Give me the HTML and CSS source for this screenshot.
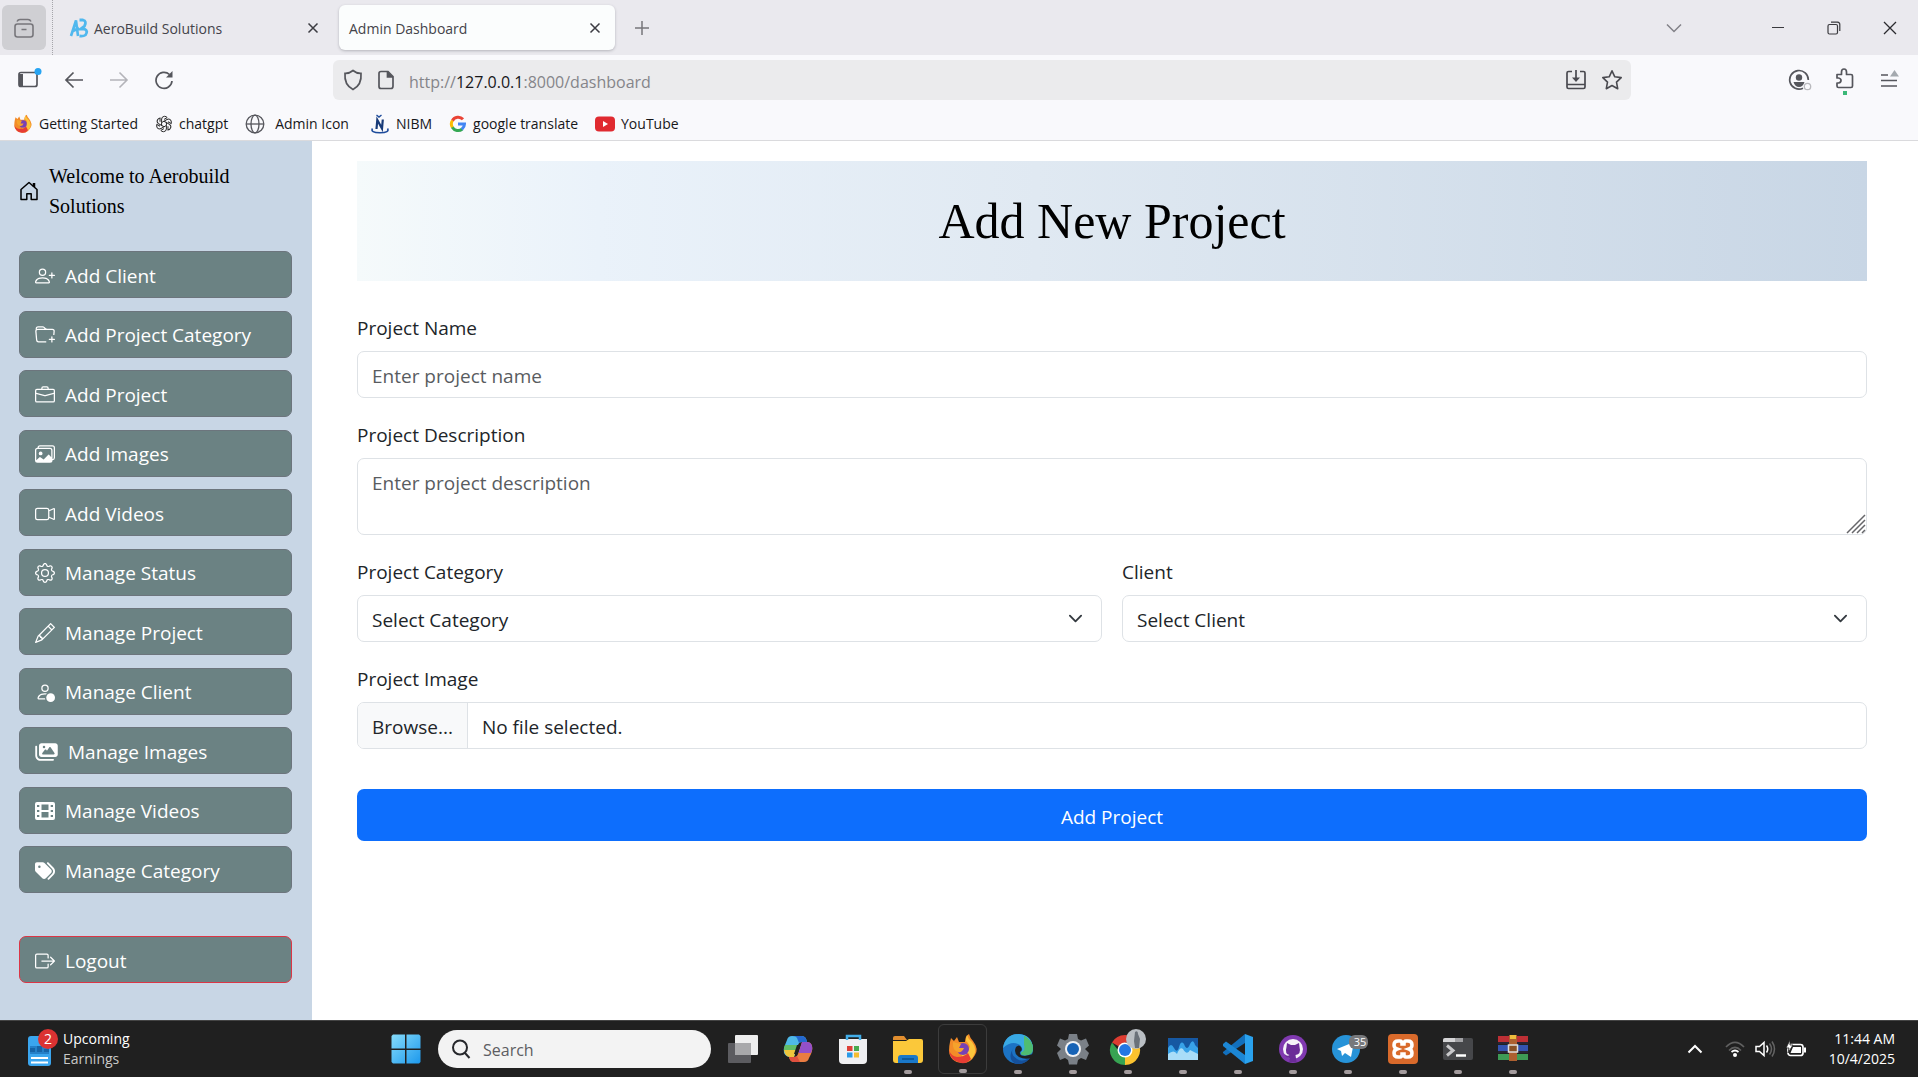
FILE: index.html
```html
<!DOCTYPE html>
<html lang="en">
<head>
<meta charset="utf-8">
<meta name="viewport" content="width=device-width, initial-scale=1">
<title>Admin Dashboard</title>
<link rel="stylesheet" href="styles.css">
</head>
<body>
<header class="browser">
  <div class="tabstrip">
    <button class="archive" type="button" aria-label="Recent tabs"><svg width="22" height="22" viewBox="0 0 22 22" fill="none" stroke="#77767b" stroke-width="1.6"><rect x="2" y="7" width="18" height="13" rx="2.5"/><path d="M4 4.500Q5 2.500 7 2.500h8q2 0 3 2M8.500 12.500h5"/></svg></button>
    <div class="tab">
      <svg class="tab-icon" width="20" height="20" viewBox="0 0 20 20" fill="none" stroke="#50b8ee" stroke-width="2.600"><path d="M2 18 7 2.500 9 18M4 13l6-3"/><path d="M10.500 2h3.500q4 1 1.500 6l-4 3h4q4 2 1 6-2 1.500-6 1" stroke-width="2.800"/></svg>
      <span class="tab-title">AeroBuild Solutions</span>
      <button class="tab-close" type="button" aria-label="Close tab"><svg width="12" height="12" viewBox="0 0 12 12" stroke="#3c3c42" stroke-width="1.500"><path d="M1.500 1.500l9 9M10.500 1.500l-9 9"/></svg></button>
    </div>
    <div class="tab tab-active">
      <span class="tab-title">Admin Dashboard</span>
      <button class="tab-close" type="button" aria-label="Close tab"><svg width="12" height="12" viewBox="0 0 12 12" stroke="#3c3c42" stroke-width="1.500"><path d="M1.500 1.500l9 9M10.500 1.500l-9 9"/></svg></button>
    </div>
    <button class="new-tab" type="button" aria-label="New tab"><svg width="16" height="16" viewBox="0 0 16 16" stroke="#77767b" stroke-width="1.500"><path d="M8 1v14M1 8h14"/></svg></button>
    <div class="window-controls">
      <button class="list-tabs" type="button" aria-label="List all tabs"><svg width="18" height="10" viewBox="0 0 18 10" fill="none" stroke="#828187" stroke-width="1.500"><path d="M2 1.500l7 7 7-7"/></svg></button>
      <button type="button" aria-label="Minimize"><svg width="14" height="14" viewBox="0 0 14 14" stroke="#3a3a3e"><path d="M1 6.500h12"/></svg></button>
      <button type="button" aria-label="Restore"><svg width="14" height="14" viewBox="0 0 14 14" fill="none" stroke="#3a3a3e" stroke-width="1.200"><rect x="1" y="3.500" width="9.500" height="9.500" rx="1.500"/><path d="M4 1.200h6.500q2.300.300 2.300 2.300V10"/></svg></button>
      <button type="button" aria-label="Close window"><svg width="14" height="14" viewBox="0 0 14 14" stroke="#2b2b2f" stroke-width="1.300"><path d="M1 1l12 12M13 1L1 13"/></svg></button>
    </div>
  </div>

  <div class="toolbar">
    <div class="nav-buttons">
      <button type="button" aria-label="Sidebar"><svg width="26" height="24" viewBox="0 0 26 24" fill="none"><rect x="3" y="4.500" width="18" height="14" rx="2" stroke="#55565c" stroke-width="1.700"/><path d="M3 6h4v12H3z" fill="#55565c"/><circle cx="22" cy="3.500" r="3.500" fill="#27a4f2"/></svg></button>
      <button type="button" aria-label="Back"><svg width="20" height="18" viewBox="0 0 20 18" fill="none" stroke="#55565c" stroke-width="1.700"><path d="M19 9H2M9.500 1.500L2 9l7.500 7.500"/></svg></button>
      <button type="button" aria-label="Forward"><svg width="20" height="18" viewBox="0 0 20 18" fill="none" stroke="#b4b4b9" stroke-width="1.600"><path d="M1 9h17M10.500 1.500L18 9l-7.500 7.500"/></svg></button>
      <button type="button" aria-label="Reload"><svg width="20" height="20" viewBox="0 0 20 20" fill="none" stroke="#55565c" stroke-width="1.700"><path d="M18 11a8 8 0 1 1-2.500-6.500"/><path d="M18.500 1v6.500H12z" fill="#55565c" stroke="none"/></svg></button>
    </div>
    <div class="address">
      <svg width="20" height="22" viewBox="0 0 20 22" fill="none" stroke="#55565c" stroke-width="1.700"><path d="M10 1.500q3.500 3 8 2.800Q19 16 10 20.500 1 16 2 4.300q4.500.200 8-2.800z"/></svg>
      <svg width="18" height="20" viewBox="0 0 18 20" fill="none" stroke="#55565c" stroke-width="1.700"><path d="M4 1.500h7l5 5V16q0 2.500-2 2.500H4q-2 0-2-2v-13q0-2 2-2z"/><path d="M10.500 1.500V7H16" fill="#55565c"/></svg>
      <div class="url">http://<span class="url-host">127.0.0.1</span>:8000/dashboard</div>
      <button type="button" aria-label="Install"><svg width="22" height="22" viewBox="0 0 22 22" fill="none" stroke="#4a4a50" stroke-width="1.700"><path d="M7 2.500H3.500Q2 2.500 2 4v14q0 1.500 1.500 1.500h15q1.500 0 1.500-1.500V4q0-1.500-1.500-1.500H15M2 15.500h18M11 1v10"/><path d="M7 8.500h8l-4 4.500z" fill="#4a4a50" stroke="none"/></svg></button>
      <button type="button" aria-label="Bookmark this page"><svg width="22" height="22" viewBox="0 0 22 22" fill="none" stroke="#4a4a50" stroke-width="1.600" stroke-linejoin="round"><path d="M11 1.800l2.800 6 6.400.800-4.700 4.500 1.200 6.600L11 16.500l-5.700 3.200 1.200-6.600L1.800 8.600l6.400-.800z"/></svg></button>
    </div>
    <div class="tool-buttons">
      <button type="button" aria-label="Account"><svg width="24" height="22" viewBox="0 0 24 22" fill="none"><path d="M15 19.200A9.300 9.300 0 1 1 20.300 11" stroke="#55565c" stroke-width="1.700"/><circle cx="11" cy="8.500" r="3.200" fill="#55565c"/><path d="M5.500 13h11q-1.500 5-5.500 5t-5.500-5z" fill="#55565c"/><circle cx="19.500" cy="17.500" r="3.200" stroke="#b9b9bd" stroke-width="1.300"/></svg></button>
      <button type="button" aria-label="Extensions"><svg width="20" height="30" viewBox="0 0 20 30" fill="none"><path d="M2 9.500h4.500V7q0-3 2.500-3t2.500 3v2.500H16q1.500 0 1.500 1.500v10q0 1.500-1.500 1.500H3.500Q2 22.500 2 21v-3h1.500q2.500-.500 2.500-2.500T3.500 13H2z" stroke="#55565c" stroke-width="1.700" stroke-linejoin="round"/><rect x="8" y="26" width="4" height="4" fill="#3cb878"/></svg></button>
      <button type="button" aria-label="Menu"><svg width="20" height="20" viewBox="0 0 20 20" stroke="#55565c" stroke-width="1.600"><path d="M1 5h7M1 10.500h16M1 16h16"/><path d="M10 6.500L14.500 0 19 6.500z" fill="#a4a9ae" stroke="none"/></svg></button>
    </div>
  </div>

  <nav class="bookmarks" aria-label="Bookmarks">
    <a href="#"><svg width="20" height="20" viewBox="0 0 32 32"><use href="#fox"/></svg>Getting Started</a>
    <a href="#"><svg width="18" height="18" viewBox="0 0 18 18" fill="none" stroke="#2b2b2b"><g id="petal"><path d="M9 6.200L6.600 7.600V4q.300-2.600 2.800-2.700 1.800 0 2.800 1.300L9 4.400"/></g><use href="#petal" transform="rotate(60 9 9)"/><use href="#petal" transform="rotate(120 9 9)"/><use href="#petal" transform="rotate(180 9 9)"/><use href="#petal" transform="rotate(240 9 9)"/><use href="#petal" transform="rotate(300 9 9)"/></svg>chatgpt</a>
    <a href="#"><svg width="20" height="20" viewBox="0 0 20 20" fill="none" stroke="#55565c" stroke-width="1.300"><circle cx="10" cy="10" r="8.800"/><ellipse cx="10" cy="10" rx="4" ry="8.800"/><path d="M1.500 10h17"/></svg><span class="wide-label">Admin Icon</span></a>
    <a href="#"><svg width="20" height="20" viewBox="0 0 20 20" fill="none" stroke="#1d4b9b"><path d="M6.500 15l.800-9 4.700 8.500.800-9" stroke="#173a78" stroke-width="2.200"/><path d="M2.500 14.500q-2.500 4 7.500 4.300 10-.300 7.500-4.300" stroke-width="1.600"/><path d="M6.500 1l2.500 2 2.500-2" stroke-width="1.400"/></svg>NIBM</a>
    <a href="#"><svg width="18" height="18" viewBox="0 0 18 18" fill="none" stroke-width="3"><path d="M14 4.200A6.600 6.600 0 0 0 3.400 5.700" stroke="#ea4335"/><path d="M3.400 5.500a6.700 6.700 0 0 0 0 7" stroke="#fbbc05"/><path d="M3.300 12.300a6.600 6.600 0 0 0 10 1.700" stroke="#34a853"/><path d="M12.800 14.300Q15.500 12 15.500 9H9" stroke="#4285f4"/></svg>google translate</a>
    <a href="#"><svg width="20" height="16" viewBox="0 0 20 16"><rect width="20" height="15" y=".5" rx="4" fill="#e02a30"/><path d="M8 5l5 3-5 3z" fill="#fff"/></svg>YouTube</a>
  </nav>
</header>

<div class="page">
  <aside class="sidebar">
    <div class="welcome">
      <svg width="20" height="20" viewBox="0 0 20 20" fill="none" stroke="#000" stroke-width="1.500"><path d="M2 8.500V18.500h5.800v-5.700h4.400v5.700H18V8.500L10 1.500z" stroke-linejoin="round"/><path d="M15 2v4" stroke-width="2.500"/></svg>
      <span>Welcome to Aerobuild Solutions</span>
    </div>
    <nav class="menu">
      <button type="button"><svg width="20" height="20" viewBox="0 0 16 16" fill="currentColor"><path d="M6 8a3 3 0 1 0 0-6 3 3 0 0 0 0 6m2-3a2 2 0 1 1-4 0 2 2 0 0 1 4 0m4 8c0 1-1 1-1 1H1s-1 0-1-1 1-4 6-4 6 3 6 4m-1-.004c-.001-.246-.154-.986-.832-1.664C9.516 10.680 8.289 10 6 10s-3.516.680-4.168 1.332c-.678.678-.830 1.418-.832 1.664z"/><path d="M13.500 5a.500.500 0 0 1 .500.500V7h1.500a.500.500 0 0 1 0 1H14v1.500a.500.500 0 0 1-1 0V8h-1.500a.500.500 0 0 1 0-1H13V5.500a.500.500 0 0 1 .500-.500"/></svg>Add Client</button>
      <button type="button"><svg width="20" height="20" viewBox="0 0 16 16" fill="currentColor"><path d="m.5 3 .04.87a2 2 0 0 0-.342 1.311l.637 7A2 2 0 0 0 2.826 14H9v-1H2.826a1 1 0 0 1-.995-.91l-.637-7A1 1 0 0 1 2.190 4h11.620a1 1 0 0 1 .996 1.090L14.540 8h1.005l.256-2.819A2 2 0 0 0 13.810 3H9.828a2 2 0 0 1-1.414-.586l-.828-.828A2 2 0 0 0 6.172 1H2.500a2 2 0 0 0-2 2m5.672-1a1 1 0 0 1 .707.293L7.586 3H2.190q-.362.002-.683.120L1.500 2.980a1 1 0 0 1 1-.980z"/><path d="M13.500 9a.5.5 0 0 1 .5.5V11h1.500a.5.5 0 1 1 0 1H14v1.500a.5.5 0 1 1-1 0V12h-1.500a.5.5 0 0 1 0-1H13V9.500a.5.5 0 0 1 .5-.5"/></svg>Add Project Category</button>
      <button type="button"><svg width="20" height="20" viewBox="0 0 16 16" fill="currentColor"><path d="M6.500 1A1.500 1.500 0 0 0 5 2.500V3H1.500A1.500 1.500 0 0 0 0 4.500v8A1.500 1.500 0 0 0 1.500 14h13a1.500 1.500 0 0 0 1.500-1.500v-8A1.500 1.500 0 0 0 14.500 3H11v-.5A1.500 1.500 0 0 0 9.500 1zm0 1h3a.5.5 0 0 1 .5.5V3H6v-.5a.5.5 0 0 1 .5-.5m1.886 6.914L15 7.151V12.500a.5.5 0 0 1-.5.5h-13a.5.5 0 0 1-.5-.5V7.150l6.614 1.764a1.500 1.500 0 0 0 .772 0M1.500 4h13a.5.5 0 0 1 .5.5v1.616L8.129 7.948a.5.5 0 0 1-.258 0L1 6.116V4.500a.5.5 0 0 1 .5-.5"/></svg>Add Project</button>
      <button type="button"><svg width="20" height="20" viewBox="0 0 16 16" fill="currentColor"><path d="M14.002 13a2 2 0 0 1-2 2h-10a2 2 0 0 1-2-2V5A2 2 0 0 1 2 3a2 2 0 0 1 2-2h10a2 2 0 0 1 2 2v8a2 2 0 0 1-1.998 2M14 2H4a1 1 0 0 0-1 1h9.002a2 2 0 0 1 2 2v7A1 1 0 0 0 15 11V3a1 1 0 0 0-1-1M2.002 4a1 1 0 0 0-1 1v8l2.646-2.354a.5.5 0 0 1 .63-.062l2.660 1.773 3.710-3.710a.5.5 0 0 1 .577-.094l1.777 1.947V5a1 1 0 0 0-1-1z"/><path d="M4.502 9a1.500 1.500 0 1 0 0-3 1.500 1.500 0 0 0 0 3"/></svg>Add Images</button>
      <button type="button"><svg width="20" height="20" viewBox="0 0 16 16" fill="currentColor"><path fill-rule="evenodd" d="M0 5a2 2 0 0 1 2-2h7.500a2 2 0 0 1 1.983 1.738l3.110-1.382A1 1 0 0 1 16 4.269v7.462a1 1 0 0 1-1.406.913l-3.111-1.382A2 2 0 0 1 9.500 13H2a2 2 0 0 1-2-2zm11.500 5.175 3.500 1.556V4.269l-3.500 1.556zM2 4a1 1 0 0 0-1 1v6a1 1 0 0 0 1 1h7.500a1 1 0 0 0 1-1V5a1 1 0 0 0-1-1z"/></svg>Add Videos</button>
      <button type="button"><svg width="20" height="20" viewBox="0 0 16 16" fill="currentColor"><path d="M8 4.754a3.246 3.246 0 1 0 0 6.492 3.246 3.246 0 0 0 0-6.492M5.754 8a2.246 2.246 0 1 1 4.492 0 2.246 2.246 0 0 1-4.492 0"/><path d="M9.796 1.343c-.527-1.790-3.065-1.790-3.592 0l-.094.319a.873.873 0 0 1-1.255.520l-.292-.160c-1.640-.892-3.433.902-2.540 2.541l.159.292a.873.873 0 0 1-.520 1.255l-.319.094c-1.790.527-1.790 3.065 0 3.592l.319.094a.873.873 0 0 1 .520 1.255l-.160.292c-.892 1.640.901 3.434 2.541 2.540l.292-.159a.873.873 0 0 1 1.255.520l.094.319c.527 1.790 3.065 1.790 3.592 0l.094-.319a.873.873 0 0 1 1.255-.520l.292.160c1.640.893 3.434-.902 2.540-2.541l-.159-.292a.873.873 0 0 1 .520-1.255l.319-.094c1.790-.527 1.790-3.065 0-3.592l-.319-.094a.873.873 0 0 1-.520-1.255l.160-.292c.893-1.640-.902-3.433-2.541-2.540l-.292.159a.873.873 0 0 1-1.255-.520zm-2.633.283c.246-.835 1.428-.835 1.674 0l.094.319a1.873 1.873 0 0 0 2.693 1.115l.291-.160c.764-.415 1.600.420 1.184 1.185l-.159.292a1.873 1.873 0 0 0 1.116 2.692l.318.094c.835.246.835 1.428 0 1.674l-.319.094a1.873 1.873 0 0 0-1.115 2.693l.160.291c.415.764-.420 1.600-1.185 1.184l-.291-.159a1.873 1.873 0 0 0-2.693 1.116l-.094.318c-.246.835-1.428.835-1.674 0l-.094-.319a1.873 1.873 0 0 0-2.692-1.115l-.292.160c-.764.415-1.600-.420-1.184-1.185l.159-.291A1.873 1.873 0 0 0 1.945 8.930l-.319-.094c-.835-.246-.835-1.428 0-1.674l.319-.094A1.873 1.873 0 0 0 3.060 4.377l-.160-.292c-.415-.764.420-1.600 1.185-1.184l.292.159a1.873 1.873 0 0 0 2.692-1.115z"/></svg>Manage Status</button>
      <button type="button"><svg width="20" height="20" viewBox="0 0 16 16" fill="currentColor"><path d="M12.146.146a.5.5 0 0 1 .708 0l3 3a.5.5 0 0 1 0 .708l-10 10a.5.5 0 0 1-.168.11l-5 2a.5.5 0 0 1-.65-.65l2-5a.5.5 0 0 1 .11-.168zM11.207 2.500 13.500 4.793 14.793 3.500 12.500 1.207zm1.586 3L10.500 3.207 4 9.707V10h.5a.5.5 0 0 1 .5.5v.5h.5a.5.5 0 0 1 .5.5v.5h.293zm-9.761 5.175-.106.106-1.528 3.821 3.821-1.528.106-.106A.5.5 0 0 1 5 12.500V12h-.5a.5.5 0 0 1-.5-.5V11h-.5a.5.5 0 0 1-.468-.325"/></svg>Manage Project</button>
      <button type="button"><svg width="20" height="20" viewBox="0 0 16 16" fill="currentColor"><path d="M11 5a3 3 0 1 1-6 0 3 3 0 0 1 6 0M8 7a2 2 0 1 0 0-4 2 2 0 0 0 0 4m.256 7a4.500 4.500 0 0 1-.229-1.004H3c.001-.246.154-.986.832-1.664C4.484 10.680 5.711 10 8 10q.39 0 .74.025c.226-.341.496-.65.804-.918Q8.844 9.002 8 9c-5 0-6 3-6 4s1 1 1 1z"/><circle cx="12.500" cy="12.500" r="3.500"/></svg>Manage Client</button>
      <button type="button"><svg width="23" height="20" viewBox="0 0 576 512" fill="currentColor"><path d="M160 32c-35.300 0-64 28.700-64 64V320c0 35.300 28.700 64 64 64H512c35.300 0 64-28.700 64-64V96c0-35.300-28.700-64-64-64H160zM396 138.700l96 144c4.900 7.400 5.400 16.800 1.200 24.600S480.900 320 472 320H328 280 200c-9.200 0-17.600-5.300-21.600-13.600s-2.900-18.200 2.900-25.400l64-80c4.600-5.700 11.400-9 18.700-9s14.200 3.300 18.700 9l17.300 21.600 56-84C360.500 132 368 128 376 128s15.500 4 20 10.700zM192 128a32 32 0 1 1 64 0 32 32 0 1 1 -64 0zM48 120c0-13.300-10.700-24-24-24S0 106.700 0 120V344c0 75.100 60.900 136 136 136H456c13.300 0 24-10.700 24-24s-10.700-24-24-24H136c-48.600 0-88-39.400-88-88V120z"/></svg>Manage Images</button>
      <button type="button"><svg width="20" height="20" viewBox="0 0 20 20" fill="currentColor"><path fill-rule="evenodd" d="M2 1h16q2 0 2 2v14q0 2-2 2H2q-2 0-2-2V3q0-2 2-2zM6.500 3.500V9h7V3.500zM6.500 11v5.500h7V11zM2 4v2h2.300V4zM2 9v2h2.300V9zM2 14v2h2.300v-2zM15.700 4v2H18V4zM15.700 9v2H18V9zM15.700 14v2H18v-2z"/></svg>Manage Videos</button>
      <button type="button"><svg width="20" height="20" viewBox="0 0 512 512" fill="currentColor"><path d="M345 39.100L472.800 168.400c52.400 53 52.400 138.200 0 191.200L360.800 472.900c-9.300 9.400-24.500 9.500-33.900 .2s-9.500-24.500-.2-33.900L438.600 325.900c33.900-34.300 33.900-89.400 0-123.700L310.900 72.900c-9.300-9.400-9.200-24.600 .2-33.900s24.600-9.200 33.900 .2zM0 229.500V80C0 53.500 21.500 32 48 32H197.500c17 0 33.300 6.700 45.300 18.700l168 168c25 25 25 65.500 0 90.500L277.300 442.700c-25 25-65.500 25-90.500 0l-168-168C6.700 262.700 0 246.500 0 229.500zM144 144a32 32 0 1 0 -64 0 32 32 0 1 0 64 0z"/></svg>Manage Category</button>
    </nav>
    <button class="logout" type="button"><svg width="20" height="20" viewBox="0 0 16 16" fill="currentColor"><path d="M10 12.500a.5.5 0 0 1-.5.5h-8a.5.5 0 0 1-.5-.5v-9a.5.5 0 0 1 .5-.5h8a.5.5 0 0 1 .5.5v2a.5.5 0 0 0 1 0v-2A1.500 1.500 0 0 0 9.500 2h-8A1.500 1.500 0 0 0 0 3.500v9A1.500 1.500 0 0 0 1.500 14h8a1.500 1.500 0 0 0 1.500-1.500v-2a.5.5 0 0 0-1 0z"/><path d="M15.854 8.354a.5.5 0 0 0 0-.708l-3-3a.5.5 0 0 0-.708.708L14.293 7.500H5.500a.5.5 0 0 0 0 1h8.793l-2.147 2.146a.5.5 0 0 0 .708.708z"/></svg>Logout</button>
  </aside>

  <main class="content">
    <h1 class="banner">Add New Project</h1>
    <form class="form">
      <div class="field">
        <label for="name">Project Name</label>
        <input class="control" id="name" type="text" placeholder="Enter project name">
      </div>
      <div class="field">
        <label for="description">Project Description</label>
        <div class="textarea-wrap">
          <textarea class="control" id="description" rows="2" placeholder="Enter project description"></textarea>
          <svg class="grip" width="20" height="20" viewBox="0 0 20 20" stroke="#66666a" stroke-width="1.500"><path d="M1 19L19 1M6 19L19 6M11 19l8-8M16 19l3-3"/></svg>
        </div>
      </div>
      <div class="field-row">
        <div class="field">
          <label for="category">Project Category</label>
          <select class="control" id="category"><option>Select Category</option></select>
        </div>
        <div class="field">
          <label for="client">Client</label>
          <select class="control" id="client"><option>Select Client</option></select>
        </div>
      </div>
      <div class="field">
        <label for="image">Project Image</label>
        <label class="control file" for="image"><span class="file-button">Browse...</span><span class="file-name">No file selected.</span></label>
        <input class="file-input" id="image" type="file">
      </div>
      <button class="submit" type="submit">Add Project</button>
    </form>
  </main>
</div>

<footer class="taskbar">
  <button class="widget" type="button">
    <svg width="34" height="40" viewBox="0 0 34 40"><rect x="4" y="7" width="23" height="30" rx="3" fill="#3aa5ee"/><path d="M6 19h5v4H6zM13 17h5v6h-5zM20 20h5v3h-5z" fill="#14609f"/><path d="M6 17h19v8H6z" fill="#1565ae" opacity=".6"/><path d="M7 29h17M7 33.500h17" stroke="#fff" stroke-width="2"/><circle cx="24" cy="10" r="10" fill="#db3232"/><text class="badge-text" x="24" y="15" text-anchor="middle" fill="#fff">2</text></svg>
    <span class="widget-text"><span>Upcoming</span><span class="dim">Earnings</span></span>
  </button>

  <div class="apps">
    <button class="app" type="button" aria-label="Start"><svg width="32" height="32" viewBox="0 0 32 32"><defs><linearGradient id="win" x2="1" y2="1" gradientUnits="objectBoundingBox"><stop stop-color="#86dcfb"/><stop offset="1" stop-color="#1c98ec"/></linearGradient></defs><path d="M3 1.500h12v14H1.500V3zM16.500 1.500H29L30.500 3v12.500h-14zM1.500 17h13.500v13.500H3L1.500 29zM16.500 17h14v12L29 30.500H16.500z" fill="url(#win)"/></svg></button>
    <label class="search"><svg width="20" height="20" viewBox="0 0 20 20" fill="none" stroke="#27282c" stroke-width="2"><circle cx="9" cy="8.500" r="7"/><path d="M13.500 13.500L18.500 19"/></svg><input type="search" placeholder="Search" aria-label="Search"></label>
    <button class="app" type="button" aria-label="Task view"><svg width="32" height="32" viewBox="0 0 32 32"><rect x="1" y="10" width="23" height="20" rx="1" fill="#5c5c60"/><rect x="8" y="2" width="23" height="20" rx="1" fill="#eee"/><path d="M8 10h16v12H8z" fill="#a9a9ab"/></svg></button>
    <button class="app" type="button" aria-label="Copilot"><svg width="32" height="32" viewBox="0 0 32 32"><path d="M10 3h10q4 0 5 6h-5q-3 0-4 3l-4 12H8q-4 0-6-4-1-4 1-8l2-5q1-4 5-4z" fill="#4fb9e8"/><path d="M10 3h10q4 0 5 6h-5q-2 0-3 1l-2-5q-1-2-5-2z" fill="#2468cf"/><path d="M3 12h13l-2 6H2q-.5-3 1-6z" fill="#62bd67"/><path d="M2 17h12l-2 7H8q-5 0-6-7z" fill="#f0c63c"/><path d="M22 29H12q-4 0-5-5h5q3 0 4-3l4-12h5q4 0 5 4 1 3-1 8l-2 4q-1 4-5 4z" fill="#ea7d42"/><path d="M20 9h5q4 0 5 4 1 3-1 7H16.500z" fill="#9450c9"/><path d="M7 24h5q2 0 3-1l3 6h-6q-4 0-5-5z" fill="#e0503f"/><path d="M15 12h3.500l-3 9H12z" fill="#202020"/></svg></button>
    <button class="app" type="button" aria-label="Store"><svg width="32" height="32" viewBox="0 0 32 32"><path d="M2 6h28v21q0 4-4 4H6q-4 0-4-4z" fill="#f0f0f2"/><path d="M10 7V3h13v4" fill="none" stroke="#42aeea" stroke-width="2.500"/><path d="M10 13h5.500v5H10z" fill="#dd4038"/><path d="M17 13h5v5h-5z" fill="#48aa4e"/><path d="M10 19.500h5.500v5H10z" fill="#2b9be8"/><path d="M17 19.500h5v5h-5z" fill="#f5bd30"/></svg></button>
    <button class="app running" type="button" aria-label="File Explorer"><svg width="32" height="32" viewBox="0 0 32 32"><path d="M1 5q0-2 2-2h9l3 4H1z" fill="#e18e2f"/><path d="M1 8h13l3-2h12q2 0 2 2v19q0 3-3 3H4q-3 0-3-3z" fill="#fbc83a"/><path d="M6 30v-5q0-3 3-3h14q3 0 3 3v5z" fill="#1a78c9"/><path d="M10 26h12" stroke="#0d5a9d" stroke-width="2"/></svg></button>
    <button class="app running active" type="button" aria-label="Firefox"><svg width="32" height="32" viewBox="0 0 32 32"><g id="fox"><path d="M3 9l1-4 3 3 3-4 2 5h6q0-6 4-8 1 4 4 7 6 8 2 14-5 9-13 8Q3 29 2 18q0-5 1-9z" fill="#f38b28"/><path d="M20 2q1 4 5 7 6 8 1 15-3 5-9 5l-3-9 7-3q4-4-2-9 0-4 1-6z" fill="#fbc53c"/><path d="M2 17q2 6 8 7 7 0 11-4l3 6q-4 5-10 4Q3 28 2 17z" fill="#e63d34"/><circle cx="16" cy="16" r="6" fill="#7741b4"/><path d="M6 9l8 2-2 4h5q-2 5-6 4-6-2-5-10z" fill="#f5a22c"/></g></svg></button>
    <button class="app running" type="button" aria-label="Edge"><svg width="32" height="32" viewBox="0 0 32 32"><circle cx="16" cy="16" r="15" fill="#1c73c4"/><path d="M1 15Q3 1 17 1q13 1 14 14 0 7-8 7-5 0-4-3 3-3-1-7-8-5-17 3z" fill="#39a9e4"/><path d="M22 2.500q9 5 9 13 0 7-8 7-5 0-4-3 5-2 3-8z" fill="#4fbd72"/><path d="M12 14q-5 7 3 12 6 4 13-2-4 8-14 7-10-5-2-17z" fill="#15509b"/><path d="M14 14q3-3 5 0 2 3-1 5-1 4 5 4l8-2-2 4q-6 2-12-1-6-4-3-10z" fill="#202020"/></svg></button>
    <button class="app running" type="button" aria-label="Settings"><svg width="32" height="32" viewBox="0 0 32 32"><path d="M12 1h8l1 5 3 1.500 5-2 3 7-4 3.500 4 4-3 7-5-2-3 2-1 4.500h-8l-1-4.500-3-2-5 2-3-7 4-4-4-3.500 3-7 5 2L11 6z" fill="#7a8087"/><circle cx="16" cy="16" r="8" fill="#f0f1f4"/><circle cx="16" cy="16" r="6" fill="#1763b6"/></svg></button>
    <button class="app running" type="button" aria-label="Chrome"><svg width="40" height="44" viewBox="0 0 40 44"><path d="M17 23L4 15.500A15 15 0 0 1 30 15.500H17z" fill="#dd3c31"/><path d="M17 23h-7L4 15.500A15 15 0 0 0 17 38l7-12z" fill="#37a352"/><path d="M17 23l7-7.500h6A15 15 0 0 1 17 38z" fill="#fbc22f"/><circle cx="17" cy="23" r="7.500" fill="#fff"/><circle cx="17" cy="23" r="6" fill="#2476e3"/><circle cx="28" cy="12" r="10" fill="#babfc4"/><path d="M27 5q3-2 3 2l2 5-1 9h-4l-1-7z" fill="#6b727a"/></svg></button>
    <button class="app running" type="button" aria-label="Task Manager"><svg width="32" height="32" viewBox="0 0 32 32"><path d="M1 5h30v22H1z" fill="#1658a2"/><path d="M1 15q3-6 6 0 3 6 5-1 2-7 5-3 3 8 6 0 3-6 5 1l3 3v12H1z" fill="#38a2e8"/><path d="M1 21q6-5 9 0 3-8 6-5 4 7 7 1l8 4v6H1z" fill="#a9ddf8"/></svg></button>
    <button class="app running" type="button" aria-label="Visual Studio Code"><svg width="32" height="32" viewBox="0 0 32 32"><path d="M23 1l8 3v24l-8 3z" fill="#2aa2ee"/><path d="M1 20l3 2.500L23 10V1L1 19z" fill="#1270bd"/><path d="M1 11l3-2.500L23 22v9L1 13z" fill="#1c87d5"/></svg></button>
    <button class="app running" type="button" aria-label="GitHub Desktop"><svg width="32" height="32" viewBox="0 0 32 32"><circle cx="16" cy="16" r="14" fill="#8039b0"/><circle cx="16" cy="16" r="10" fill="#f5f2f8"/><path d="M10 10l4 2h4l4-2 .500 4q2 7-4 8l1 7h-7v-4q-4 0-5-4 3 3 5 1-5-1-3-8z" fill="#6b2c98"/></svg></button>
    <button class="app running" type="button" aria-label="Telegram"><svg width="40" height="44" viewBox="0 0 40 44"><circle cx="18" cy="22" r="14" fill="#2793d8"/><path d="M9 22l17-7-3 15-6-4-3 3-1-5z" fill="#fff"/><rect x="21" y="8" width="19" height="14" rx="6" fill="#77787b"/><text class="count-text" x="32" y="19" text-anchor="middle" fill="#fff">35</text></svg></button>
    <button class="app running" type="button" aria-label="XAMPP"><svg width="32" height="32" viewBox="0 0 32 32"><rect x="1" y="1" width="30" height="30" rx="4" fill="#d96a2b"/><path d="M11 8h2q2 0 2 3h2q0-3 2-3h2q4 0 4 4 0 3-3 4 3 1 3 4 0 4-4 4h-2q-2 0-2-3h-2q0 3-2 3h-2q-4 0-4-4 0-3 3-4-3-1-3-4 0-4 4-4z" fill="none" stroke="#fff" stroke-width="3.500"/></svg></button>
    <button class="app running" type="button" aria-label="Terminal"><svg width="32" height="32" viewBox="0 0 32 32"><rect x="1" y="5" width="30" height="22" rx="2" fill="#46474a"/><path d="M3 5h10v4H1V7q0-2 2-2z" fill="#d4d4d6"/><path d="M13 5h8v4h-8z" fill="#a1a1a4"/><path d="M5 12.500l6 5-6 5" fill="none" stroke="#c8c8ca" stroke-width="3"/><path d="M14 22.500h10" stroke="#fff" stroke-width="2.500"/></svg></button>
    <button class="app running" type="button" aria-label="WinRAR"><svg width="32" height="32" viewBox="0 0 32 32"><path d="M1 3h30v8H1z" fill="#bd2f35"/><path d="M1 12h30v8H1z" fill="#3453b0"/><path d="M1 21h30v6H1z" fill="#3e9b55"/><path d="M1 9h30v2H1zM1 18h30v2H1z" fill="#2a2533"/><path d="M12 2h8v26h-8z" fill="#ad6030"/><path d="M13 2h6v4h-6z" fill="#edbc3d"/><rect x="11.500" y="12" width="9" height="7" fill="#895026" stroke="#ddd" stroke-width="1.500"/></svg></button>
  </div>

  <div class="tray">
    <svg width="16" height="10" viewBox="0 0 16 10" fill="none" stroke="#fff" stroke-width="2"><path d="M1.500 8.500L8 2l6.500 6.500"/></svg>
    <div class="tray-icons">
      <svg width="20" height="18" viewBox="0 0 20 18" fill="none" stroke-width="1.700"><path d="M1 7q9-9 18 0M4 10.500q6-6 12 0" stroke="#606060"/><path d="M6.500 12q3.500-3 7 0" stroke="#fff"/><circle cx="10" cy="15" r="2" fill="#fff"/></svg>
      <svg width="22" height="18" viewBox="0 0 22 18" fill="none" stroke="#fff" stroke-width="1.500"><path d="M2 6.500h3.500L10 2.500v13l-4.500-4H2zM12.500 5.500q2.500 3.500 0 7"/><path d="M15.500 3.500q4 5.500 0 11M18 1.500q5 7.500 0 15" stroke="#646464"/></svg>
      <svg width="22" height="18" viewBox="0 0 22 18" fill="none"><rect x="3" y="4.500" width="15" height="11" rx="2.500" stroke="#fff" stroke-width="1.700"/><path d="M8 7h8v6H5.500zM19 7.500h2v5h-2z" fill="#fff"/><path d="M5 0L1 8h3l-1 5 5-8H5z" fill="#fff" stroke="#202020" stroke-width=".8"/></svg>
    </div>
    <div class="clock"><span>11:44 AM</span><span>10/4/2025</span></div>
  </div>
</footer>
</body>
</html>
```
FILE: styles.css
```css
* {
  box-sizing: border-box;
}

body {
  margin: 0;
  min-height: 100vh;
  display: flex;
  flex-direction: column;
  font-family: "Open Sans", "Noto Sans", sans-serif;
  font-size: 19px;
  line-height: 30px;
  color: #212529;
  background: #fff;
}

button,
input,
select,
textarea {
  font: inherit;
  color: inherit;
}

button {
  display: flex;
  align-items: center;
  justify-content: center;
  padding: 0;
  border: 0;
  background: none;
}

svg {
  display: block;
  flex: none;
}

/* Browser frame */
.browser {
  border-bottom: 1px solid #dadadd;
  background: #f9f9fc;
  font-size: 14px;
  line-height: 20px;
}

.tabstrip {
  display: flex;
  align-items: center;
  height: 55px;
  padding-left: 2px;
  background: #eae9ee;
}

.archive {
  width: 44px;
  height: 45px;
  border-radius: 6px;
  background: #cfcfd3;
}

.tab {
  display: flex;
  align-items: center;
  width: 276px;
  height: 45px;
  padding: 0 14px 0 10px;
  border-radius: 6px;
  color: #44434a;
}

.archive + .tab {
  width: 287px;
  height: 55px;
  margin: 0 0 0 6px;
  padding: 0 20px 0 16px;
  border-left: 1px dotted #a5a5aa;
  border-radius: 0;
}

.tab-active {
  background: #fbfdfd;
  box-shadow: 0 1px 3px #b4b4ba;
}

.tab-icon {
  margin-right: 5px;
}

.tab-title {
  padding-top: 2px;
}

.tab-close {
  margin-left: auto;
}

.new-tab {
  width: 54px;
  height: 45px;
}

.window-controls {
  display: flex;
  margin-left: auto;
}

.window-controls button {
  width: 56px;
  height: 45px;
}

.window-controls .list-tabs {
  margin-right: 48px;
}

.toolbar {
  display: flex;
  align-items: center;
  height: 50px;
}

.nav-buttons {
  display: flex;
  width: 333px;
  padding-left: 6px;
}

.nav-buttons button,
.tool-buttons button {
  width: 45px;
  height: 40px;
}

.address {
  display: flex;
  flex: 1;
  align-items: center;
  gap: 14px;
  height: 40px;
  padding: 0 8px 0 10px;
  border-radius: 6px;
  background: #ebebed;
  color: #85858a;
  font-size: 16px;
}

.url {
  flex: 1;
  padding-top: 3px;
}

.url-host {
  color: #17171a;
}

.tool-buttons {
  display: flex;
  justify-content: flex-end;
  width: 287px;
  padding-right: 6px;
}

.bookmarks {
  display: flex;
  align-items: center;
  gap: 17px;
  height: 35px;
  padding: 2px 13px 0;
}

.bookmarks a {
  display: flex;
  align-items: center;
  gap: 6px;
  color: #17171a;
  text-decoration: none;
}

.wide-label {
  padding: 0 4px;
}

/* Dashboard */
.page {
  display: flex;
  flex: 1;
}

.sidebar {
  width: 312px;
  padding: 20px 20px 36px 19px;
  background: #c8d6e5;
}

.welcome {
  display: flex;
  align-items: center;
  gap: 10px;
  margin-bottom: 30px;
  color: #000;
  font-family: "Liberation Serif", serif;
  font-size: 20px;
}

.menu {
  display: flex;
  flex-direction: column;
  justify-content: space-between;
  height: 642px;
}

.menu button,
.logout {
  justify-content: flex-start;
  gap: 10px;
  width: 100%;
  height: 47px;
  padding: 2px 15px 0;
  border: 1px solid #6c757d;
  border-radius: 7px;
  background: #6b8283;
  color: #fff;
}

.logout {
  margin-top: 43px;
  border-color: #dc3545;
}

.content {
  flex: 1;
  padding: 20px 51px 20px 45px;
}

.banner {
  margin: 0 0 32px;
  padding: 30px 0;
  background: linear-gradient(to right, #f5fafb, #eaf2fa 16%, #e0e9f2 45%, #c8d6e5);
  color: #000;
  font-family: "Liberation Serif", serif;
  font-size: 50px;
  font-weight: 400;
  line-height: 60px;
  text-align: center;
}

.form,
.field {
  display: flex;
  flex-direction: column;
}

.form {
  gap: 22px;
}

.field {
  gap: 8px;
}

.field-row {
  display: grid;
  grid-template-columns: 1fr 1fr;
  gap: 20px;
}

.control {
  width: 100%;
  height: 47px;
  padding: 9px 14px 6px;
  border: 1px solid #dee2e6;
  border-radius: 7px;
  background: #fff;
}

.control::placeholder {
  color: #595c5f;
  opacity: 1;
}

select.control {
  appearance: none;
  background: #fff url("data:image/svg+xml,%3Csvg xmlns='http://www.w3.org/2000/svg' viewBox='0 0 16 16'%3E%3Cpath fill='none' stroke='%23343a40' stroke-linecap='round' stroke-linejoin='round' stroke-width='2' d='m2 5 6 6 6-6'/%3E%3C/svg%3E") no-repeat right 18px center / 15px 15px;
}

.textarea-wrap {
  position: relative;
}

textarea.control {
  display: block;
  height: 77px;
  resize: none;
}

.grip {
  position: absolute;
  right: 1px;
  bottom: 1px;
}

.control.file {
  display: flex;
  padding: 0;
  overflow: hidden;
}

.file-button,
.file-name {
  padding: 9px 14px 6px;
}

.file-button {
  border-right: 1px solid #dee2e6;
  background: #f8f9fa;
}

.field .file-input {
  position: absolute;
  width: 1px;
  height: 1px;
  opacity: 0;
}

.submit {
  height: 52px;
  margin-top: 18px;
  padding-top: 3px;
  border-radius: 7px;
  background: #0d6efd;
  color: #fff;
}

/* Taskbar */
.taskbar {
  display: grid;
  grid-template-columns: 1fr auto 1fr;
  height: 57px;
  border-top: 1px solid #444;
  background: #202020;
  color: #fff;
  font-size: 14px;
  line-height: 20px;
}

.widget {
  justify-self: start;
  gap: 5px;
  padding-left: 24px;
}

.widget-text,
.clock {
  display: flex;
  flex-direction: column;
}

.widget-text {
  text-align: left;
}

.dim {
  color: #c8c8c8;
}

.badge-text {
  font-size: 14px;
}

.count-text {
  font-size: 11px;
}

.apps {
  display: flex;
  align-items: center;
}

.app {
  position: relative;
  width: 55px;
  height: 50px;
}

.running::after {
  content: "";
  position: absolute;
  bottom: 0;
  left: 24px;
  width: 8px;
  height: 4px;
  border-radius: 2px;
  background: #a39b9d;
}

.active {
  width: 49px;
  margin: 0 3px;
  border: 1px solid #3c3c3c;
  border-radius: 6px;
}

.active::after {
  left: 20px;
}

.search {
  display: flex;
  align-items: center;
  gap: 12px;
  width: 273px;
  height: 38px;
  margin: 0 4px 0 5px;
  padding: 0 13px;
  border-radius: 19px;
  background: #f3f3f3;
}

.search input {
  width: 100%;
  padding: 2px 0 0;
  border: 0;
  outline: 0;
  background: none;
  font-size: 16px;
}

.search input::placeholder {
  color: #5d5d62;
  opacity: 1;
}

.tray {
  display: flex;
  align-items: center;
  justify-content: flex-end;
  padding-right: 23px;
}

.tray-icons {
  display: flex;
  gap: 9px;
  margin: 0 22px;
}

.clock {
  text-align: right;
}
```
